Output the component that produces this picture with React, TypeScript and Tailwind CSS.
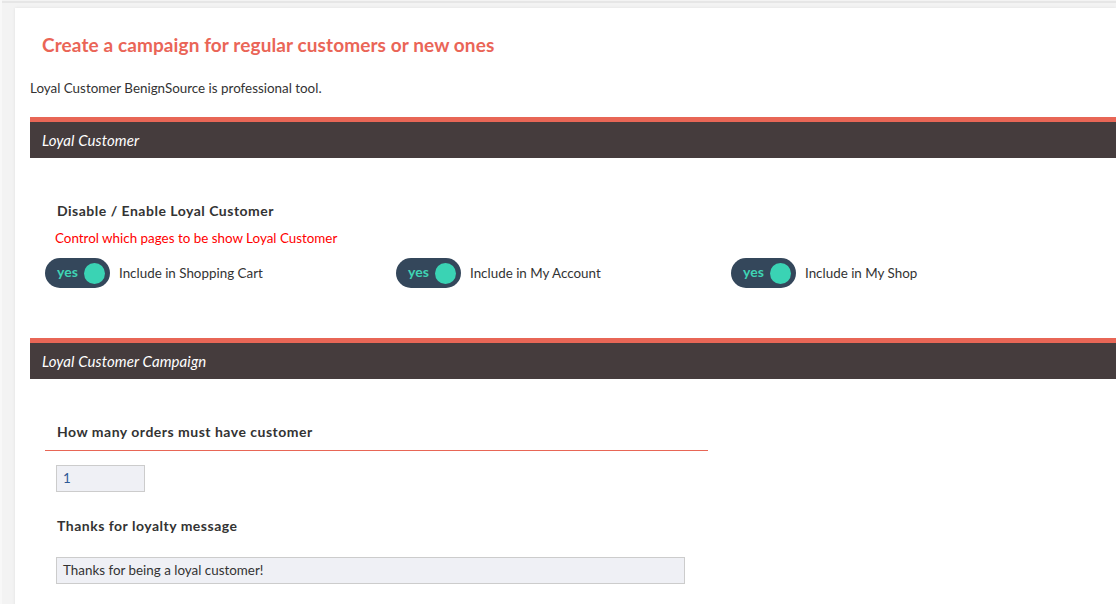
import React from "react";

const font = { fontFamily: "Lato, 'Open Sans', 'Liberation Sans', sans-serif" };

function Toggle({ label }: { label: string }) {
  return (
    <div className="flex items-center">
      <div className="flex h-[30px] w-[65px] items-center justify-between rounded-full bg-[#34475b] pl-[12px] pr-[5px]">
        <span className="mb-[3px] text-[14px] font-bold leading-none text-[#3fd4b4]">yes</span>
        <span className="h-[21px] w-[21px] rounded-full bg-[#3ad3b4]" />
      </div>
      <span className="ml-[9px] text-[13.4px] text-[#333]">{label}</span>
    </div>
  );
}

function Bar({ title }: { title: string }) {
  return (
    <div className="border-t-[5px] border-[#e86656] bg-[#453c3d] h-[41px] flex items-center pl-[12px]">
      <span className="text-[15px] italic tracking-[0.1px] text-white">{title}</span>
    </div>
  );
}

const label = "text-[14px] font-bold tracking-[0.5px] leading-[18px] text-[#333]";

export default function App() {
  return (
    <div className="h-[604px] w-[1116px] overflow-hidden bg-[#f3f3f3] border-l-[2px] border-[#f8f8f8]" style={font}>
      <div className="mt-[1px] h-[2px] bg-[#e6e6e6]" />
      <div className="ml-[13px] mt-[5px] h-[700px] bg-white shadow-[0_0_3px_rgba(0,0,0,0.08)] pl-[15px]">
        <h1 className="pt-[25px] pl-[12px] text-[19px] font-bold tracking-[0.1px] leading-[24px] text-[#ea6557]">
          Create a campaign for regular customers or new ones
        </h1>
        <p className="mt-[22px] text-[13.4px] leading-[18px] text-[#333]">
          Loyal Customer BenignSource is professional tool.
        </p>
        <div className="mt-[20px]">
          <Bar title="Loyal Customer" />
        </div>
        <div className={`pl-[27px] mt-[44px] ${label}`}>
          Disable / Enable Loyal Customer
        </div>
        <div className="pl-[25px] mt-[9px] text-[13.4px] leading-[18px] text-[#ff0000]">
          Control which pages to be show Loyal Customer
        </div>
        <div className="mt-[11px] flex pl-[15px]">
          <div className="w-[351px]"><Toggle label="Include in Shopping Cart" /></div>
          <div className="w-[335px]"><Toggle label="Include in My Account" /></div>
          <div><Toggle label="Include in My Shop" /></div>
        </div>
        <div className="mt-[50px]">
          <Bar title="Loyal Customer Campaign" />
        </div>
        <div className={`ml-[15px] mt-[44px] w-[663px] border-b-[1px] border-solid border-[#e86656] pb-[9px] pl-[12px] ${label}`}>
          How many orders must have customer
        </div>
        <div className="ml-[26px] mt-[14px] flex h-[27px] w-[89px] items-center border border-[#cccccc] bg-[#eff0f5] pl-[6px] text-[13.4px] text-[#2d5a96]">
          1
        </div>
        <div className={`ml-[27px] mt-[25px] ${label}`}>
          Thanks for loyalty message
        </div>
        <div className="ml-[26px] mt-[22px] flex h-[27px] w-[629px] items-center border border-[#cccccc] bg-[#eff0f5] pl-[6px] text-[13.4px] text-[#333]">
          Thanks for being a loyal customer!
        </div>
      </div>
    </div>
  );
}
